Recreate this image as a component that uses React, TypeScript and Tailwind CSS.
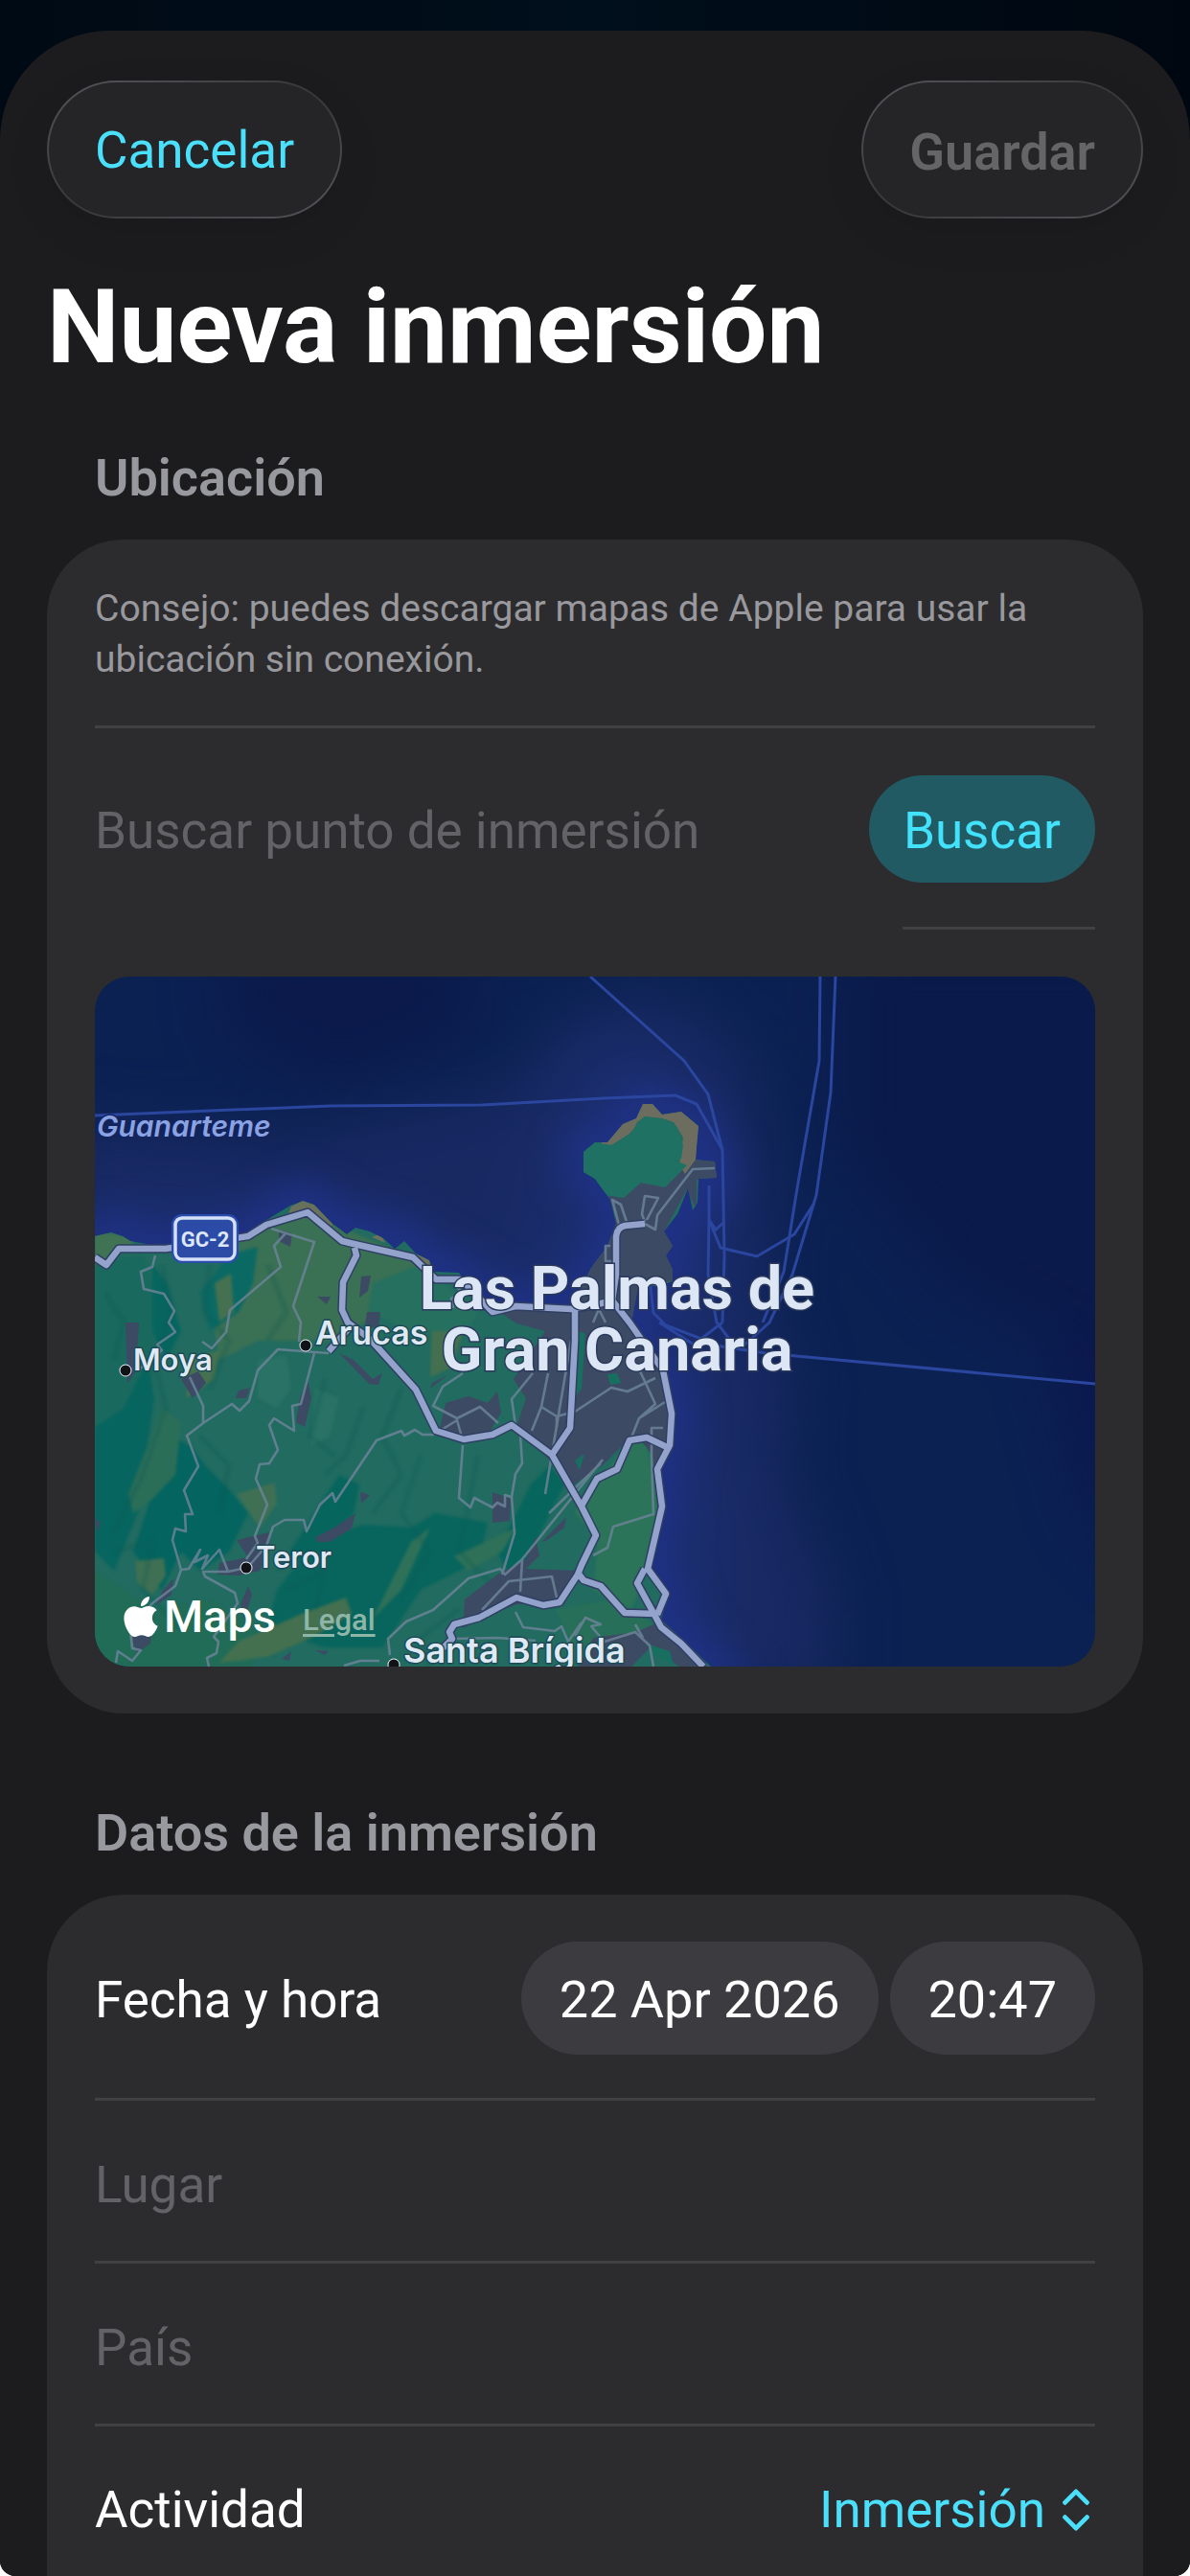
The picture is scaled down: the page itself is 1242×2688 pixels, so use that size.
import { useState } from 'react';
import type { ReactNode } from 'react';
import { FaApple } from 'react-icons/fa';

const COAST =
  'M0 271 L17 267 L29 271 L37 276 L81 284 L149 274 L184 251 L204 239 L217 234 L229 238 L248 258 L263 269 L272 262 L287 266 L301 273 L313 284 L323 276 L335 289 L349 296 L353 308 L380 309 L404 338 L439 341 L497 343 L518 304 L535 281 L544 258 L538 233 L522 211 L510 204 L510 183 L522 173 L535 173 L551 154 L565 148 L572 133 L582 133 L592 144 L612 141 L630 156 L628 178 L627 191 L647 193 L649 210 L630 211 L629 236 L624 244 L619 221 L608 248 L594 266 L603 281 L596 291 L603 306 L603 318 L587 324 L568 318 L560 361 L595 411 L605 458 L600 494 L589 514 L594 553 L579 614 L599 644 L591 671 L616 694 L643 720 L0 720 Z';

const HIGHWAYS = [
  'M0 293 L12 301 L25 284 L74 284 L160 271 L179 259 L222 246 L258 276 L266 278 L332 293 L356 316 L380 316 L390 324 L415 350 L439 344 L497 347 L521 343 L540 338 L544 311 L544 271 Q545 262 553 260 L574 258',
  'M540 338 L558 361 L572 381 L593 411 L602 456 L600 489 L587 514 L592 553 L577 618 L596 644 L587 666',
  'M574 618 L566 633 L583 664 L591 679 L612 696 L635 720',
  'M271 283 L273 291 L259 319 L258 348 L264 361 L287 378 L335 431 L356 474 L385 483 L415 478 L435 468 L477 499 L508 553 L523 583 L508 614 L504 624 L485 653 L468 656 L440 648 L401 669 L375 676 L370 684 L373 691 L363 701',
  'M501 349 L501 380 L496 471 L477 499',
  'M507 554 L524 524 L545 514 L558 484 L576 481 L597 491',
  'M504 622 L510 630 L528 636 L553 664 L585 665',
  'M244 391 L266 366',
];

const ROADS = [
  'M244 393 L191 389 L170 411 L161 443 L151 453 L143 446 L113 466 L96 479 L108 511 L93 536 L102 561 L94 561 L95 579 L84 576 L81 588 L90 619 L84 636 L60 654 L37 681 L39 701 L48 703 L39 714 L24 704 L22 716',
  'M229 393 L215 446 L206 448 L208 474 L187 461 L182 468 L191 494 L182 508 L172 509 L168 524 L180 551 L167 584 L170 591 L158 608',
  'M354 478 L342 478 L334 473 L323 479 L320 474 L294 484 L251 548 L248 539 L235 551 L221 579 L218 567 L198 567 L186 574 L179 594 L160 616',
  'M99 418 L113 448 L113 466',
  'M90 619 L98 618 L110 598 L104 611 L118 604 L112 618 L130 598 L139 621 L113 621 L115 626 L146 643 L149 654 L124 689 L129 694 L127 706 L117 711 L119 720',
  'M139 621 L158 617',
  'M384 489 L380 544 L392 554 L396 544 L415 554 L420 549 L428 553 L428 541 L435 543',
  'M439 468 L444 478 L446 508 L439 519 L435 543 L438 581 L425 624',
  'M308 708 L306 691 L325 673 L353 661 L390 628 L423 618 L428 624 L446 608 L530 504',
  'M446 608 L444 642 M404 661 L432 631 L477 626 L482 648',
  'M384 414 L363 428 L353 448 L378 461 L402 449 L421 466 M360 474 L378 463 L384 484',
  'M457 414 L435 441 L439 468',
  'M473 414 L466 449 L456 474 M466 449 L482 459 L501 454 L539 429 L556 433 L585 419',
  'M482 459 L482 470 M560 396 L570 414 L585 446 L568 461 L560 481 M595 444 L568 461',
  'M593 471 L581 471 L581 501 L583 561 L541 574 L535 596 L520 604',
  'M501 688 L512 669 L528 676 L518 678 L532 694 L564 684 L579 698 L583 720 M564 676 L572 690',
  'M63 291 L60 303 L48 308 L51 326 L72 331 L83 349 L77 361 L84 371 L65 384 L70 390 L45 411',
  'M184 263 L229 277 L207 344 L215 361 L213 381',
  'M199 268 L187 281 L194 303 L141 348 L137 371 L122 388 L112 381',
  'M439 663 L447 679 L480 683 L487 678 L494 694 L508 674',
  'M260 719 L277 714 L297 714 M373 691 L420 690 L460 693',
  'M497 380 L470 540 M528 508 L474 560',
  'M647 200 L624 201 L587 249 L585 264 L574 258',
  'M574 256 L571 248 L574 229 L588 231 L576 254 M547 259 L540 233 L549 238 L555 256',
  'M378 324 L384 330 L372 336 L374 346 M520 361 L526 347 L533 361',
  'M538 281 L533 281 L533 297 L540 297',
];

const SEA_ROUTES = [
  'M0 145 L246 135 L404 134 L531 127 L606 124 L628 133 L655 181 L657 291 L655 361',
  'M517 0 L615 88 L640 123 L655 181',
  'M757 0 L756 88 L733 221 L719 308 L697 361',
  'M773 0 L768 121 L753 228 L728 311 L704 361 L676 386',
  'M751 236 L730 269 L691 292 L653 283 L641 254 L641 218',
  'M641 254 L640 311 L649 361 L662 378 M641 254 L648 264 L657 256',
  'M571 268 L571 288 L580 324 L583 351 L596 364 L654 386 L700 393 L1044 425',
  'M584 268 L577 300 L580 324 M589 361 L625 384 L655 361',
];

const FIELDS = [
  { id: 'lugar', label: 'Lugar' },
  { id: 'pais', label: 'País' },
] as const;

const TOWNS = [
  { name: 'Moya', dot: [32, 411], at: [40, 411], size: 31 },
  { name: 'Arucas', dot: [220, 385], at: [230, 384], size: 34 },
  { name: 'Teror', dot: [158, 617], at: [168, 617], size: 31 },
  { name: 'Santa Brígida', dot: [312, 718], at: [322, 716], size: 36 },
] as const;

function MapDrawing() {
  return (
    <svg
      viewBox="0 0 1044 720"
      preserveAspectRatio="xMidYMid slice"
      className="block h-full w-full"
      role="img"
      aria-label="Mapa de Las Palmas de Gran Canaria"
    >
      <defs>
        <filter id="soft" x="-30%" y="-30%" width="160%" height="160%" colorInterpolationFilters="sRGB">
          <feGaussianBlur stdDeviation="30" />
        </filter>
        <filter id="softer" x="-30%" y="-30%" width="160%" height="160%" colorInterpolationFilters="sRGB">
          <feGaussianBlur stdDeviation="18" />
        </filter>
        <filter id="grain" x="0" y="0" width="100%" height="100%" colorInterpolationFilters="sRGB">
          <feGaussianBlur stdDeviation="1.5" />
        </filter>
        <clipPath id="land">
          <path d={COAST} />
        </clipPath>
      </defs>

      {/* Sea and depth */}
      <rect width="1044" height="720" fill="#0b2152" />
      <g filter="url(#soft)">
        <path d="M130 -40 L400 -40 L390 60 L250 110 L140 60 Z" fill="#0b1a4b" />
        <path d="M780 -40 L1100 -40 L1100 420 L900 330 L780 180 Z" fill="#0a1a4a" />
        <path d="M990 360 L1100 360 L1100 620 L1040 560 Z" fill="#0b184d" />
        <path
          d="M-40 150 L200 170 L420 120 L520 30 L600 20 L680 80 L710 220 L700 340 L730 420 L720 520 L770 640 L770 760 L400 760 L300 400 L-40 300 Z"
          fill="#182962"
        />
        <path
          d="M500 60 L600 70 L650 150 L670 320 L640 400 L670 560 L660 760 L-40 760 L-40 225 L150 215 L260 240 L440 300 L470 150 Z"
          fill="#1a2d6c"
        />
      </g>
      <path d={COAST} fill="#1f3184" stroke="#1f3184" strokeWidth="40" filter="url(#softer)" />

      <g fill="none" stroke="#2a469f" strokeWidth="3">
        {SEA_ROUTES.map((d) => (
          <path key={d} d={d} />
        ))}
      </g>

      {/* Land cover */}
      <path d={COAST} fill="#216b60" />
      <g clipPath="url(#land)">
        <g filter="url(#grain)">
          <path d="M150 274 L222 246 L330 293 L356 316 L370 350 L330 370 L300 350 L250 380 L170 380 L130 400 L120 340 L140 300 Z" fill="#3a7054" />
          <path d="M0 265 L40 272 L38 284 L22 284 L12 298 L0 292 Z" fill="#3f7353" />
          <path d="M0 300 L50 290 L70 340 L60 420 L40 520 L0 560 Z" fill="#1a695e" />
          <path d="M140 290 L170 282 L165 320 L150 350 L120 370 L110 330 Z" fill="#0b6963" />
          <path d="M60 300 L75 320 L90 370 L75 400 L60 370 Z M0 470 L30 450 L55 400 L62 440 L45 560 L20 620 L0 600 Z" fill="#07655f" />
          <path d="M80 480 L100 490 L115 510 L140 535 L160 560 L140 600 L110 620 L90 600 L70 640 L40 600 L60 540 Z" fill="#04645f" />
          <path d="M230 590 L280 572 L330 575 L355 560 L410 570 L400 610 L340 640 L300 700 L240 700 L180 680 L190 640 Z" fill="#07655d" />
          <path d="M255 520 L276 530 L270 560 L235 600 L190 620 L210 590 Z M455 530 L475 510 L490 530 L460 590 L440 640 L420 600 Z" fill="#06655d" />
          <path d="M0 620 L60 660 L120 650 L180 690 L160 720 L0 720 Z" fill="#216c57" />
          <path d="M148 540 L188 528 L190 550 L172 575 Z M42 610 L72 607 L74 625 L60 645 L44 632 Z" fill="#3f7054" />
          <path d="M216 665 L262 648 L268 665 L230 688 L180 710 L130 716 L150 694 Z M352 360 L388 361 L372 408 L350 418 Z" fill="#44704f" />
          <path d="M125 320 L142 310 L145 350 L130 360 Z M100 400 L130 390 L125 420 L95 440 Z" fill="#467150" />
          <path d="M330 590 L350 575 L320 640 L290 670 Z M375 605 L440 575 L425 600 L390 620 Z" fill="#2f7058" />
          <path d="M290 320 L340 300 L400 350 L390 370 L330 370 L285 350 Z" fill="#26705f" />
          <path d="M500 560 L558 484 L576 488 L590 560 L577 618 L560 660 L520 640 L525 585 Z" fill="#2b7459" />
          <path d="M480 660 L540 650 L590 680 L560 690 L500 700 Z" fill="#276f58" />
          <path d="M70 450 L90 465 L84 520 L60 545 L40 560 L35 540 L55 490 Z" fill="#2b6e58" />
          <path d="M170 400 L200 395 L205 430 L190 450 L170 440 Z M230 430 L255 440 L245 480 L225 490 Z" fill="#297265" />
        </g>

        {/* Relief folds */}
        <g stroke="#0d5a55" strokeWidth="5" fill="none" opacity="0.25" strokeLinejoin="round" filter="url(#grain)">
          <path d="M10 330 L30 360 L20 400 M70 300 L80 350 L62 400 L74 450 L50 520 L20 580" />
          <path d="M240 420 L225 480 L250 500 M280 450 L262 500 L240 520 M320 430 L300 480 L320 520 L290 560" />
          <path d="M110 480 L140 510 L130 560 M20 600 L60 590 L50 640 L90 680 M200 640 L240 620 L230 660" />
          <path d="M340 500 L320 560 L350 600 L320 650 M400 500 L380 600 L420 640 M380 660 L340 690 L350 720" />
          <path d="M120 300 L115 350 L140 380 L120 430 M180 300 L200 350 L180 380" />
        </g>

        {/* Urban areas */}
        <g fill="#3c4a63">
          <path d="M404 338 L497 343 L520 300 L544 250 L536 230 L560 215 L590 216 L627 191 L649 193 L649 211 L628 212 L628 244 L618 222 L594 266 L604 281 L603 318 L568 320 L562 361 L596 411 L606 458 L600 494 L590 520 L590 560 L582 500 L570 484 L556 484 L530 510 L500 530 L470 500 L440 470 L450 440 L437 420 L450 400 L470 370 L440 362 Z" />
          <path d="M366 445 L390 438 L410 445 L420 433 L424 455 L412 475 L385 480 L360 472 Z" />
          <path d="M32 361 L46 361 L43 411 L34 425 Z M90 420 L108 412 L116 424 L102 440 Z M150 432 L162 429 L158 440 L147 440 Z" />
          <path d="M192 264 L206 268 L204 282 L192 276 Z M278 313 L288 312 L285 328 L276 335 Z M232 334 L246 334 L242 342 Z M284 350 L298 350 L296 368 L282 364 Z" />
          <path d="M222 420 L226 440 L219 470 L210 465 L214 440 Z M255 393 L270 400 L290 420 L300 414 L296 426 L286 425 L270 408 Z" />
          <path d="M230 585 L250 575 L272 560 L268 576 L245 590 L232 590 Z M277 538 L287 541 L278 550 Z" />
          <path d="M148 588 L182 580 L182 600 L172 620 L150 625 L128 624 L130 612 L160 606 Z" />
          <path d="M415 538 L434 545 L433 568 L415 570 Z M466 590 L492 564 L490 575 L472 588 Z M352 424 L368 416 L350 430 Z" />
          <path d="M386 650 L420 624 L450 608 L460 585 L464 604 L450 618 L505 620 L490 655 L440 655 L400 672 L384 680 Z" />
          <path d="M38 690 L60 680 L58 696 L44 706 Z M70 642 L82 628 L80 645 L64 656 Z M195 712 L205 704 L203 714 Z M230 703 L244 704 L240 708 Z" />
          <path d="M520 690 L565 684 L592 672 L640 720 L610 720 L580 700 L560 720 L505 720 Z" />
          <path d="M152 655 L160 636 L164 645 L156 670 Z M0 565 L6 570 L3 580 Z" />
        </g>
        <g fill="#17705f">
          <path d="M535 415 L545 414 L549 424 L538 426 Z M500 370 L512 372 L508 430 L500 440 Z M501 505 L511 498 L506 515 Z M575 696 L600 704 L604 718 L585 708 Z" />
        </g>
        {/* Isleta */}
        <path d="M533 180 L558 164 L574 146 L592 148 L604 152 L614 168 L610 196 L616 206 L627 191 L640 190 L640 130 L560 120 L520 160 Z" fill="#6c6d5f" />
        <path d="M500 170 L540 176 L560 164 L566 152 L574 146 L594 149 L608 157 L614 176 L612 190 L606 192 L618 197 L595 220 L570 215 L552 231 L538 229 L500 210 Z" fill="#1f7263" />
        <g fill="#69705c">
          <path d="M205 240 L217 234 L229 238 L248 258 L246 264 L222 243 L200 252 Z M289 272 L298 268 L303 278 Z M335 289 L349 296 L353 308 L340 300 Z" />
        </g>
      </g>

      <g fill="none" stroke="#6b8398" strokeWidth="2.6" strokeLinejoin="round" opacity="0.85">
        {ROADS.map((d) => (
          <path key={d} d={d} />
        ))}
      </g>
      <g fill="none" stroke="#2f3f63" strokeWidth="9.5" strokeLinejoin="round">
        {HIGHWAYS.map((d) => (
          <path key={d} d={d} />
        ))}
      </g>
      <g fill="none" stroke="#93a3cb" strokeWidth="6.5" strokeLinejoin="round">
        {HIGHWAYS.map((d) => (
          <path key={d} d={d} />
        ))}
      </g>

      {/* GC-2 shield */}
      <rect x="80" y="248" width="70" height="51" rx="11" fill="#2a4cae" />
      <rect x="84" y="252" width="62" height="43" rx="7" fill="#2b4ba6" stroke="#d6e0f8" strokeWidth="3.5" />
      <text x="115" y="282" textAnchor="middle" fontSize="22" fontWeight="700" fill="#dde6fa" fontFamily="Roboto, sans-serif">
        GC-2
      </text>

      <g fontFamily="Inter, sans-serif" fontWeight="600" paintOrder="stroke" strokeLinejoin="round">
        <text x="2" y="167" fontSize="30" fontStyle="italic" fill="#8aa3e2" stroke="#15245f" strokeWidth="3">
          Guanarteme
        </text>
        {TOWNS.map((town) => (
          <g key={town.name}>
            <circle cx={town.dot[0]} cy={town.dot[1]} r="5.5" fill="#121317" stroke="#e8eef8" strokeWidth="2" />
            <text x={town.at[0]} y={town.at[1]} fontSize={town.size} fill="#dfe9f4" stroke="#1f4a58" strokeWidth="3">
              {town.name}
            </text>
          </g>
        ))}
      </g>
      <g
        fontFamily="Roboto, sans-serif"
        fontSize="63"
        fontWeight="700"
        textAnchor="middle"
        fill="#dde6f5"
        stroke="#2b3a5c"
        strokeWidth="3"
        paintOrder="stroke"
      >
        <text x="545" y="347">Las Palmas de</text>
        <text x="545" y="411">Gran Canaria</text>
      </g>
    </svg>
  );
}

function SectionTitle({ children }: { children: ReactNode }) {
  return <h2 className="px-[50px] text-[54px] font-semibold leading-16 text-[#98989f]">{children}</h2>;
}

function GlassButton({ children, className, disabled }: { children: ReactNode; className: string; disabled?: boolean }) {
  return (
    <button
      type="button"
      disabled={disabled}
      className="rounded-full bg-linear-to-br from-[#56565a] via-[#38383b] to-[#56565a] p-[2px] shadow-[0_16px_48px_rgba(0,0,0,0.08)]"
    >
      <span className={`flex h-[140px] items-center rounded-full bg-[#252528] px-12 pt-1 ${className}`}>{children}</span>
    </button>
  );
}

export default function App() {
  const [query, setQuery] = useState('');
  const [activity, setActivity] = useState('Inmersión');

  return (
    <div className="bg-white">
      <div className="h-screen overflow-hidden rounded-b-2xl bg-linear-to-r from-[#000a14] via-[#000f1c] to-[#000710] pt-8 font-[Roboto,sans-serif] text-white">
        <main className="min-h-full rounded-t-[114px] bg-[#1c1c1e] px-[49px] pt-[52px]">
          <header className="flex items-center justify-between">
            <GlassButton className="text-[53px] text-[#4ae0fb]">Cancelar</GlassButton>
            <GlassButton disabled className="text-[54px] font-semibold text-[#656568]">
              Guardar
            </GlassButton>
          </header>

          <h1 className="mt-[54px] text-[107px] font-bold leading-[120px]">Nueva inmersión</h1>

          <section className="mt-[65px]">
            <SectionTitle>Ubicación</SectionTitle>
            <div className="mt-8 rounded-[80px] bg-[#2c2c2e] px-[50px] pb-[49px]">
              <p className="border-b-3 border-[#414144] pt-[46px] pb-[42px] text-[39px] leading-[53px] text-[#98989d]">
                Consejo: puedes descargar mapas de Apple para usar la ubicación sin conexión.
              </p>

              <form
                className="flex items-center justify-between gap-8 pt-[49px] pb-[46px]"
                onSubmit={(event) => event.preventDefault()}
              >
                <input
                  type="text"
                  aria-label="Buscar punto de inmersión"
                  placeholder="Buscar punto de inmersión"
                  value={query}
                  onChange={(event) => setQuery(event.target.value)}
                  className="min-w-0 flex-1 bg-transparent pt-1 text-[53px] leading-16 outline-none placeholder:text-[#636367]"
                />
                <button
                  type="submit"
                  className="h-28 rounded-full bg-[#215a63] px-9 pt-1 text-[53px] leading-16 text-[#43e2fc]"
                >
                  Buscar
                </button>
              </form>
              <div className="ml-auto h-[3px] w-[201px] bg-[#414144]" />

              <div className="relative mt-[49px] aspect-[1044/720] overflow-hidden rounded-[36px]">
                <MapDrawing />
                <div className="absolute bottom-5 left-6 flex items-end gap-7">
                  <span className="flex items-center text-[47px] font-medium leading-16">
                    <FaApple className="size-12" aria-hidden="true" />
                    Maps
                  </span>
                  <a href="#legal" className="text-[31px] font-medium leading-14 text-[#8db5a8] underline underline-offset-4">
                    Legal
                  </a>
                </div>
              </div>
            </div>
          </section>

          <section className="mt-[93px]">
            <SectionTitle>Datos de la inmersión</SectionTitle>
            <div className="mt-8 rounded-t-[80px] bg-[#2c2c2e] px-[50px] text-[53px] leading-16">
              <div className="flex items-center justify-between border-b-3 border-[#414144] pt-[49px] pb-[45px]">
                <span className="pt-1">Fecha y hora</span>
                <div className="flex gap-3 text-[54px]">
                  <button type="button" className="h-[118px] rounded-full bg-[#3c3b40] px-10 pt-1">
                    22 Apr 2026
                  </button>
                  <button type="button" className="h-[118px] rounded-full bg-[#3c3b40] px-10 pt-1">
                    20:47
                  </button>
                </div>
              </div>

              {FIELDS.map((field) => (
                <div key={field.id} className="flex border-b-3 border-[#414144]">
                  <input
                    id={field.id}
                    type="text"
                    aria-label={field.label}
                    placeholder={field.label}
                    className="h-[167px] w-full bg-transparent pt-2 outline-none placeholder:text-[#636367]"
                  />
                </div>
              ))}

              <div className="flex h-[174px] items-center justify-between">
                <label htmlFor="actividad">Actividad</label>
                <div className="flex items-center gap-4 pr-1 text-[#4ae0fb]">
                  <select
                    id="actividad"
                    value={activity}
                    onChange={(event) => setActivity(event.target.value)}
                    className="field-sizing-content appearance-none bg-transparent outline-none"
                  >
                    <option>Inmersión</option>
                  </select>
                  <svg viewBox="0 0 30 46" className="h-11 w-8" fill="none" stroke="currentColor" strokeWidth="5" strokeLinecap="round" strokeLinejoin="round">
                    <path d="M3 15 L15 3 L27 15 M3 31 L15 43 L27 31" />
                  </svg>
                </div>
              </div>
            </div>
          </section>
        </main>
      </div>
    </div>
  );
}
